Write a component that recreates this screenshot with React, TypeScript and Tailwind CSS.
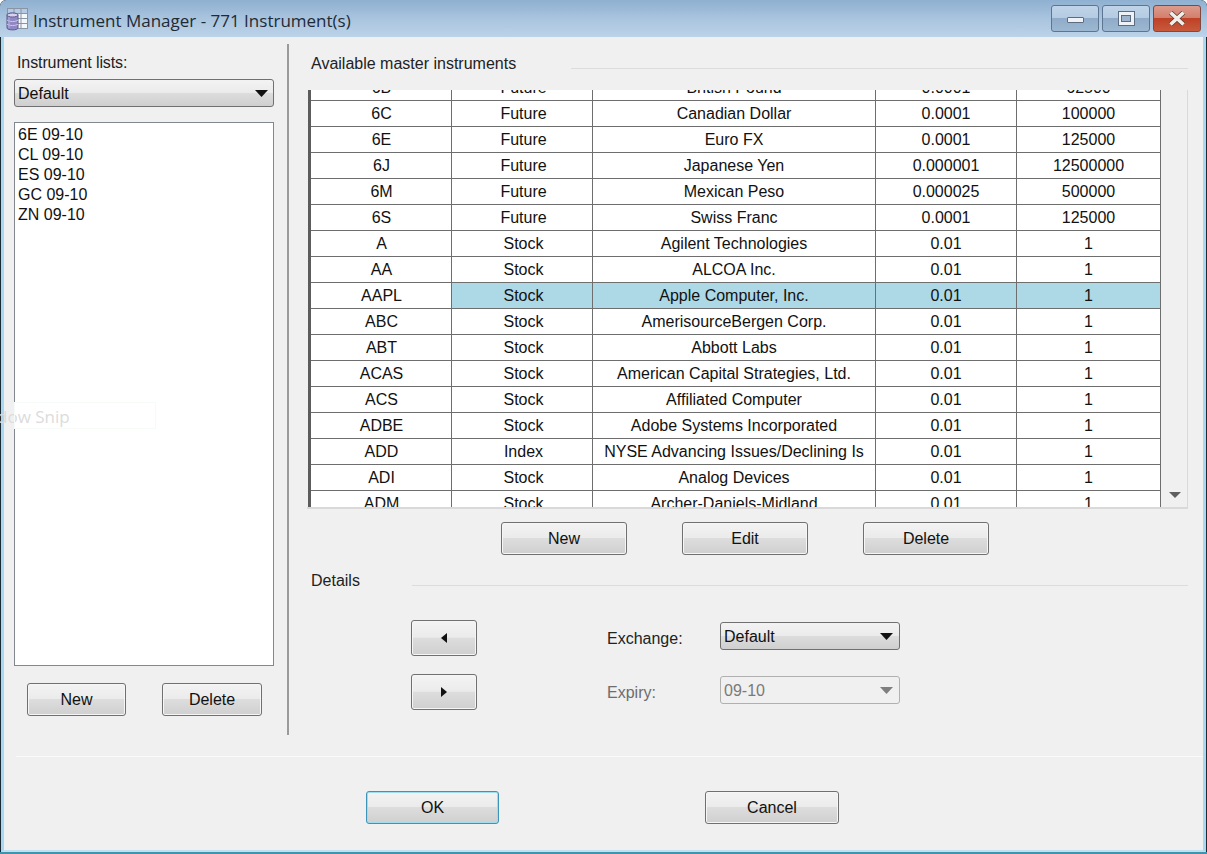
import React from 'react';

const rows = [
  ['6B', 'Future', 'British Pound', '0.0001', '62500'],
  ['6C', 'Future', 'Canadian Dollar', '0.0001', '100000'],
  ['6E', 'Future', 'Euro FX', '0.0001', '125000'],
  ['6J', 'Future', 'Japanese Yen', '0.000001', '12500000'],
  ['6M', 'Future', 'Mexican Peso', '0.000025', '500000'],
  ['6S', 'Future', 'Swiss Franc', '0.0001', '125000'],
  ['A', 'Stock', 'Agilent Technologies', '0.01', '1'],
  ['AA', 'Stock', 'ALCOA Inc.', '0.01', '1'],
  ['AAPL', 'Stock', 'Apple Computer, Inc.', '0.01', '1'],
  ['ABC', 'Stock', 'AmerisourceBergen Corp.', '0.01', '1'],
  ['ABT', 'Stock', 'Abbott Labs', '0.01', '1'],
  ['ACAS', 'Stock', 'American Capital Strategies, Ltd.', '0.01', '1'],
  ['ACS', 'Stock', 'Affiliated Computer', '0.01', '1'],
  ['ADBE', 'Stock', 'Adobe Systems Incorporated', '0.01', '1'],
  ['ADD', 'Index', 'NYSE Advancing Issues/Declining Is', '0.01', '1'],
  ['ADI', 'Stock', 'Analog Devices', '0.01', '1'],
  ['ADM', 'Stock', 'Archer-Daniels-Midland', '0.01', '1'],
];

const colClasses = [
  'w-[141px] pl-[1px] border-r border-r-[#6e6e6e]',
  'w-[141px] pl-[3px] border-r border-r-[#6e6e6e]',
  'w-[283px] border-r border-r-[#6e6e6e]',
  'w-[141px] border-r border-r-[#6e6e6e]',
  'w-[143px]',
];

const btnBg =
  'bg-[linear-gradient(to_bottom,#f3f3f3_0%,#ebebeb_48%,#dddddd_50%,#cfcfcf_100%)]';

function Btn({ className, focused, children }: { className: string; focused?: boolean; children: React.ReactNode }) {
  const edge = focused
    ? 'border-[#3c94b8] shadow-[inset_0_0_0_1px_#9fdcf0]'
    : 'border-[#707070] shadow-[inset_0_0_0_1px_#f6f6f6]';
  return (
    <div
      className={`flex items-center justify-center rounded-[3px] border text-[16px] text-[#111] ${edge} ${btnBg} ${className}`}
    >
      {children}
    </div>
  );
}

function Caret({ color = '#111' }: { color?: string }) {
  return (
    <svg width="13" height="7" viewBox="0 0 13 7" className="shrink-0">
      <path d="M0 0h13L6.5 7z" fill={color} />
    </svg>
  );
}

function GroupTitle({ label, line }: { label: string; line: string }) {
  return (
    <div className="flex items-center">
      <span className="text-[16px] text-[#222]">{label}</span>
      <div className={`h-px flex-1 bg-[#dcdcdc] ${line}`} />
    </div>
  );
}

export default function App() {
  return (
    <div className="relative flex h-[854px] w-[1207px] flex-col overflow-hidden rounded-t-[6px] bg-[#1c2b33] font-['Liberation_Sans',Arial,sans-serif]">
      {/* title bar */}
      <div className="flex h-[37px] shrink-0 items-start rounded-t-[6px] bg-[linear-gradient(to_bottom,#8fb0d0_0%,#a9c4de_50%,#bcd3e9_100%)] pl-[6px] pr-[6px]">
        <svg width="22" height="24" viewBox="0 0 22 24" className="mt-[7px]">
          <rect x="1.5" y="1.5" width="20" height="20" fill="#f3f6fa" stroke="#8a94a3" />
          <rect x="1.5" y="1.5" width="20" height="5" fill="#b4cbe6" stroke="#8a94a3" />
          <path d="M8 1.5v20M15 1.5v20M1.5 11.5h20M1.5 16.5h20" stroke="#8a94a3" />
          <path d="M1 8c0-2.5 11-2.5 11 0v13c0 2.5-11 2.5-11 0z" fill="#8f88c4" stroke="#5f5a8f" />
          <ellipse cx="6.5" cy="8" rx="5.5" ry="2" fill="#d5d2ee" stroke="#5f5a8f" />
          <path d="M1 13c2 2 9 2 11 0M1 17c2 2 9 2 11 0" stroke="#cfcce8" fill="none" />
          <path d="M3 10v11" stroke="#b3aedb" />
        </svg>
        <span className="ml-[5px] mt-[9px] font-['Open_Sans',sans-serif] text-[17px] leading-[24px] text-[#1e2a36]">
          Instrument Manager - 771 Instrument(s)
        </span>
        <div className="ml-auto mt-[5px] flex gap-[3px]">
          <div className="flex h-[27px] w-[48px] items-center justify-center rounded-[3px] border border-[#5d7591] bg-[linear-gradient(to_bottom,#c0d4e8_0%,#b4cbe2_48%,#8fabc8_50%,#9db8d2_100%)]">
            <div className="mt-[3px] h-[6px] w-[17px] rounded-[1px] border border-[#5b6c80] bg-[#eef2f6]" />
          </div>
          <div className="flex h-[27px] w-[48px] items-center justify-center rounded-[3px] border border-[#5d7591] bg-[linear-gradient(to_bottom,#c0d4e8_0%,#b4cbe2_48%,#8fabc8_50%,#9db8d2_100%)]">
            <div className="flex h-[15px] w-[17px] items-center justify-center border border-[#5b6c80] bg-[#eef2f6]">
              <div className="h-[7px] w-[10px] border border-[#5b6c80] bg-[#9db4cc]" />
            </div>
          </div>
          <div className="flex h-[27px] w-[48px] items-center justify-center rounded-[3px] border border-[#7d4a42] bg-[linear-gradient(to_bottom,#dc9a8c_0%,#d27f6d_48%,#bf4126_50%,#c85a3c_100%)]">
            <svg width="18" height="15" viewBox="0 0 18 15">
              <path d="M2.5 1.5l13 12M15.5 1.5l-13 12" stroke="#5a3a36" strokeWidth="5" />
              <path d="M2.5 1.5l13 12M15.5 1.5l-13 12" stroke="#f1eeea" strokeWidth="3.6" />
            </svg>
          </div>
        </div>
      </div>

      {/* body */}
      <div className="mx-px flex min-h-0 flex-1 flex-col border-x-[3px] border-b-[2px] border-x-[#a9d8f2] border-b-[#bfe0f2] bg-[#f0f0f0]">
        <div className="flex h-[698px] shrink-0 pt-[7px]">
          {/* left panel */}
          <div className="flex h-[691px] w-[285px] shrink-0 flex-col border-r-2 border-r-[#9a9a9a] pl-[10px]">
            <div className="mt-[10px] pl-[3px] text-[16px] leading-[18px] tracking-[-0.1px] text-[#222]">Instrument lists:</div>
            <div className={`mt-[7px] flex h-[28px] w-[260px] items-center justify-between rounded-[3px] border border-[#707070] pl-[3px] pr-[5px] text-[16px] text-[#111] ${btnBg}`}>
              <span className="mt-[2px]">Default</span>
              <Caret />
            </div>
            <div className="mt-[15px] h-[544px] w-[260px] border border-[#828790] bg-white px-[3px] pt-[2px] text-[16px] leading-[20px] text-[#111]">
              <div>6E 09-10</div>
              <div>CL 09-10</div>
              <div>ES 09-10</div>
              <div>GC 09-10</div>
              <div>ZN 09-10</div>
            </div>
            <div className="mt-[17px] flex">
              <Btn className="ml-[13px] h-[33px] w-[99px]">New</Btn>
              <Btn className="ml-[36px] h-[33px] w-[100px]">Delete</Btn>
            </div>
          </div>

          {/* right panel */}
          <div className="flex min-w-0 flex-1 flex-col pl-[22px] pr-[15px]">
            <div className="mt-[8px]">
              <GroupTitle label="Available master instruments" line="ml-[55px] mt-[9px]" />
            </div>
            <div className="-ml-[4px] mt-[14px] flex h-[419px] w-[881px] border-b-2 border-r border-b-[#d9d9d9] border-r-[#d9d9d9]">
              <div className="ml-[1px] h-full w-[853px] overflow-hidden border-l-[3px] border-r border-l-[#5c5c5c] border-r-[#6e6e6e] bg-white">
                <div className="-mt-[15px]">
                  {rows.map((r) => {
                    const active = r[0] === 'AAPL';
                    return (
                      <div key={r[0]} className="flex h-[26px] border-b border-b-[#6e6e6e] text-[16px] leading-[25px] text-[#111]">
                        {r.map((cell, i) => (
                          <div
                            key={i}
                            className={`${colClasses[i]} shrink-0 whitespace-nowrap text-center ${active && i > 0 ? 'bg-[#add8e6]' : ''}`}
                          >
                            {cell}
                          </div>
                        ))}
                      </div>
                    );
                  })}
                </div>
              </div>
              <div className="relative flex-1 bg-[#f0f0f0]">
                <svg width="12" height="6" viewBox="0 0 12 6" className="absolute bottom-[9px] left-[8px]">
                  <path d="M0 0h12L6 6z" fill="#5f5f5f" />
                </svg>
              </div>
            </div>

            <div className="mt-[13px] flex gap-[55px] pl-[190px]">
              <Btn className="h-[33px] w-[126px]">New</Btn>
              <Btn className="h-[33px] w-[126px]">Edit</Btn>
              <Btn className="h-[33px] w-[126px]">Delete</Btn>
            </div>

            <div className="mt-[14px]">
              <GroupTitle label="Details" line="ml-[52px] mt-[8px]" />
            </div>

            <div className="mt-[27px] flex pl-[100px]">
              <div className="flex flex-col gap-[18px]">
                <Btn className="h-[36px] w-[66px]">
                  <svg width="6" height="10" viewBox="0 0 6 10"><path d="M6 0v10L0 5z" fill="#111" /></svg>
                </Btn>
                <Btn className="h-[36px] w-[66px]">
                  <svg width="6" height="10" viewBox="0 0 6 10"><path d="M0 0v10l6-5z" fill="#111" /></svg>
                </Btn>
              </div>
              <div className="ml-[130px] mt-[1px] flex flex-col gap-[24px]">
                <div className="flex items-center">
                  <span className="w-[113px] pt-[6px] text-[16px] text-[#222]">Exchange:</span>
                  <div className={`flex h-[28px] w-[180px] items-center justify-between rounded-[3px] border border-[#707070] pl-[3px] pr-[6px] text-[16px] text-[#111] ${btnBg}`}>
                    <span className="mt-[1px]">Default</span>
                    <Caret />
                  </div>
                </div>
                <div className="flex items-center">
                  <span className="w-[113px] pt-[6px] text-[16px] text-[#6d6d6d]">Expiry:</span>
                  <div className="flex h-[28px] w-[180px] items-center justify-between rounded-[3px] border border-[#b0b0b0] bg-[#f0f0f0] pl-[3px] pr-[6px] text-[16px] text-[#7a7a7a]">
                    <span className="mt-[1px]">09-10</span>
                    <Caret color="#7f7f7f" />
                  </div>
                </div>
              </div>
            </div>
          </div>
        </div>

        <div className="ml-[12px] mt-[21px] h-px bg-[#fafafa]" />

        <div className="mt-[34px] flex pl-[362px]">
          <Btn focused className="h-[33px] w-[133px]">OK</Btn>
          <Btn className="ml-[206px] h-[33px] w-[134px]">Cancel</Btn>
        </div>
      </div>

      <div className="h-[2px] shrink-0 bg-[#3f93ab]" />

      {/* snip tool ghost over the list */}
      <div className="pointer-events-none absolute left-0 top-[402px] h-[27px] w-[156px] overflow-hidden font-['Open_Sans',sans-serif] text-[17px] leading-[29px] text-[#dcdcdc]">
        <span className="-ml-[3px] block whitespace-nowrap">dow Snip</span>
        <div className="absolute bottom-0 left-[14px] right-0 top-0 border border-[#f6fbf8]" />
      </div>
    </div>
  );
}
